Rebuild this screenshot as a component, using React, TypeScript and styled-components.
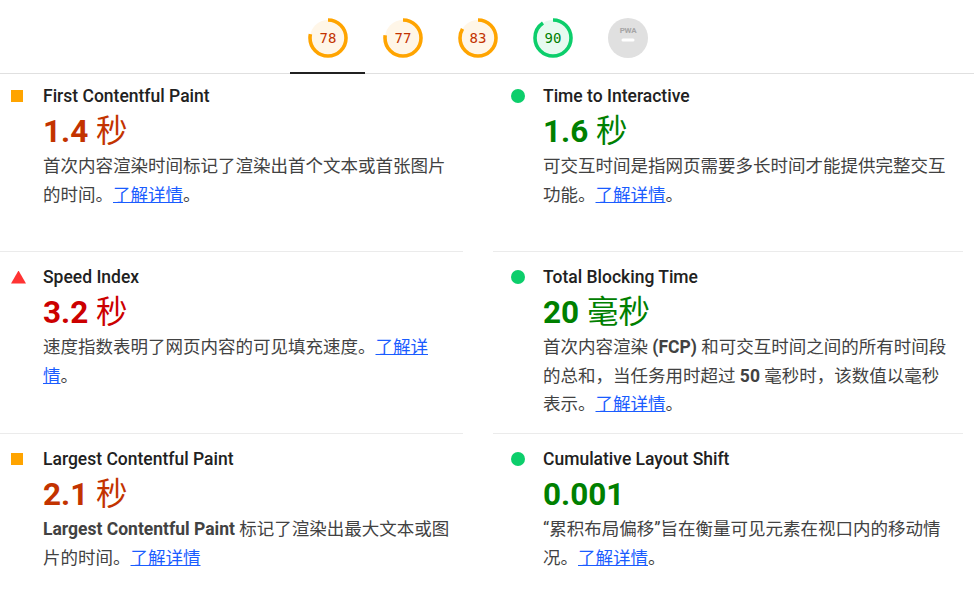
import React from 'react';
import styled, { createGlobalStyle, css } from 'styled-components';

const Global = createGlobalStyle`
  html, body { margin: 0; padding: 0; background: #ffffff; }
  body {
    font-family: Roboto, "Noto Sans CJK SC", sans-serif;
    overflow: hidden;
    -webkit-font-smoothing: antialiased;
  }
`;

type Rating = 'pass' | 'average' | 'fail';

const palette: Record<Rating, { icon: string; value: string; fill: string }> = {
  pass: { icon: '#0cce6b', value: '#008000', fill: '#e7faf0' },
  average: { icon: '#ffa400', value: '#c33300', fill: '#fff6e8' },
  fail: { icon: '#ff3333', value: '#cc0000', fill: '#ffeaea' },
};

const Report = styled.div`
  margin-left: -7px;
  width: 981px;
`;

const Header = styled.div`
  height: 74px;
  box-sizing: border-box;
  border-bottom: 1px solid #e0e0e0;
`;

const Tabs = styled.div`
  width: 969px;
  display: flex;
  justify-content: center;
`;

const Tab = styled.div<{ $active?: boolean }>`
  position: relative;
  width: 75px;
  height: 73px;
  box-sizing: border-box;
  padding-top: 18px;
  display: flex;
  justify-content: center;
  ${(p) =>
    p.$active &&
    css`
      &::after {
        content: '';
        position: absolute;
        left: 0;
        right: 0;
        bottom: -1px;
        height: 2px;
        background: #212121;
      }
    `}
`;

const GaugeSvg = styled.svg`
  width: 40px;
  height: 40px;
  display: block;
`;

const GaugeText = styled.text<{ $color: string }>`
  font-family: "DejaVu Sans Mono", "Liberation Mono", monospace;
  font-size: 14px;
  fill: ${(p) => p.$color};
`;

const PwaText = styled.text`
  font-family: Roboto, "Liberation Sans", sans-serif;
  font-size: 8px;
  font-weight: 700;
  fill: #a6a6a6;
  letter-spacing: -0.3px;
`;

const Gauge: React.FC<{ score: number; rating: Rating }> = ({ score, rating }) => {
  const r = 18;
  const c = 2 * Math.PI * r;
  const col = palette[rating];
  return (
    <GaugeSvg viewBox="0 0 40 40">
      <circle cx="20" cy="20" r={r} fill={col.fill} />
      <circle
        cx="20"
        cy="20"
        r={r}
        fill="none"
        stroke={col.icon}
        strokeWidth="3.6"
        strokeDasharray={`${(score / 100) * c} ${c}`}
        transform="rotate(-90 20 20)"
      />
      <GaugeText x="20" y="25" textAnchor="middle" $color={col.value}>
        {score}
      </GaugeText>
    </GaugeSvg>
  );
};

const PwaGauge: React.FC = () => (
  <GaugeSvg viewBox="0 0 40 40">
    <circle cx="20" cy="20" r="20" fill="#e0e0e0" />
    <PwaText x="20" y="14.5" textAnchor="middle">
      PWA
    </PwaText>
    <rect x="13.5" y="20.5" width="13" height="3" rx="1.5" fill="#ffffff" />
  </GaugeSvg>
);

const Metrics = styled.div`
  width: 970px;
  display: grid;
  grid-template-columns: 470px 470px;
  column-gap: 30px;
`;

const Metric = styled.div<{ $first?: boolean }>`
  box-sizing: border-box;
  height: ${(p) => (p.$first ? 177 : 182)}px;
  padding: ${(p) => (p.$first ? 11 : 14)}px 9px 0 18px;
  border-top: ${(p) => (p.$first ? 'none' : '1px solid #ebebeb')};
  display: flex;
`;

const IconCol = styled.div`
  width: 32px;
  flex: none;
  height: 22px;
  display: flex;
  align-items: center;
`;

const Icon = styled.span<{ $rating: Rating }>`
  display: block;
  background: ${(p) => palette[p.$rating].icon};
  ${(p) =>
    p.$rating === 'average' &&
    css`
      width: 12px;
      height: 12px;
    `}
  ${(p) =>
    p.$rating === 'pass' &&
    css`
      width: 14px;
      height: 14px;
      border-radius: 50%;
    `}
  ${(p) =>
    p.$rating === 'fail' &&
    css`
      width: 15px;
      height: 13px;
      clip-path: polygon(50% 0, 100% 100%, 0 100%);
    `}
`;

const Body = styled.div`
  flex: 1;
  min-width: 0;
`;

const Title = styled.div`
  font-size: 17.5px;
  line-height: 22px;
  font-weight: 500;
  color: #212121;
`;

const Value = styled.div<{ $rating: Rating }>`
  margin-top: 5px;
  font-size: 31.5px;
  line-height: 40px;
  font-weight: 700;
  color: ${(p) => palette[p.$rating].value};
`;

const Unit = styled.span`
  font-weight: 400;
`;

const Desc = styled.div`
  font-size: 17.5px;
  line-height: 28.5px;
  color: #424242;
`;

const Strong = styled.b`
  font-weight: 700;
`;

const Link = styled.a`
  color: #1a5cff;
  text-decoration: underline;
`;

type MetricData = {
  title: string;
  rating: Rating;
  num: string;
  unit?: string;
  desc: React.ReactNode;
};

const more = <Link href="#">了解详情</Link>;

const metrics: MetricData[] = [
  {
    title: 'First Contentful Paint',
    rating: 'average',
    num: '1.4',
    unit: '秒',
    desc: <>首次内容渲染时间标记了渲染出首个文本或首张图片的时间。{more}。</>,
  },
  {
    title: 'Time to Interactive',
    rating: 'pass',
    num: '1.6',
    unit: '秒',
    desc: <>可交互时间是指网页需要多长时间才能提供完整交互功能。{more}。</>,
  },
  {
    title: 'Speed Index',
    rating: 'fail',
    num: '3.2',
    unit: '秒',
    desc: <>速度指数表明了网页内容的可见填充速度。{more}。</>,
  },
  {
    title: 'Total Blocking Time',
    rating: 'pass',
    num: '20',
    unit: '毫秒',
    desc: (
      <>
        首次内容渲染 <Strong>(FCP)</Strong> 和可交互时间之间的所有时间段的总和，当任务用时超过 <Strong>50</Strong> 毫秒时，该数值以毫秒表示。{more}。
      </>
    ),
  },
  {
    title: 'Largest Contentful Paint',
    rating: 'average',
    num: '2.1',
    unit: '秒',
    desc: (
      <>
        <Strong>Largest Contentful Paint</Strong> 标记了渲染出最大文本或图片的时间。{more}
      </>
    ),
  },
  {
    title: 'Cumulative Layout Shift',
    rating: 'pass',
    num: '0.001',
    desc: <>“累积布局偏移”旨在衡量可见元素在视口内的移动情况。{more}。</>,
  },
];

const gauges: { score: number; rating: Rating }[] = [
  { score: 78, rating: 'average' },
  { score: 77, rating: 'average' },
  { score: 83, rating: 'average' },
  { score: 90, rating: 'pass' },
];

export default function App() {
  return (
    <>
      <Global />
      <Report>
        <Header>
          <Tabs>
            {gauges.map((g, i) => (
              <Tab key={i} $active={i === 0}>
                <Gauge score={g.score} rating={g.rating} />
              </Tab>
            ))}
            <Tab>
              <PwaGauge />
            </Tab>
          </Tabs>
        </Header>
        <Metrics>
          {metrics.map((m, i) => (
            <Metric key={m.title} $first={i < 2}>
              <IconCol>
                <Icon $rating={m.rating} />
              </IconCol>
              <Body>
                <Title>{m.title}</Title>
                <Value $rating={m.rating}>
                  {m.num}
                  {m.unit && <Unit> {m.unit}</Unit>}
                </Value>
                <Desc>{m.desc}</Desc>
              </Body>
            </Metric>
          ))}
        </Metrics>
      </Report>
    </>
  );
}
